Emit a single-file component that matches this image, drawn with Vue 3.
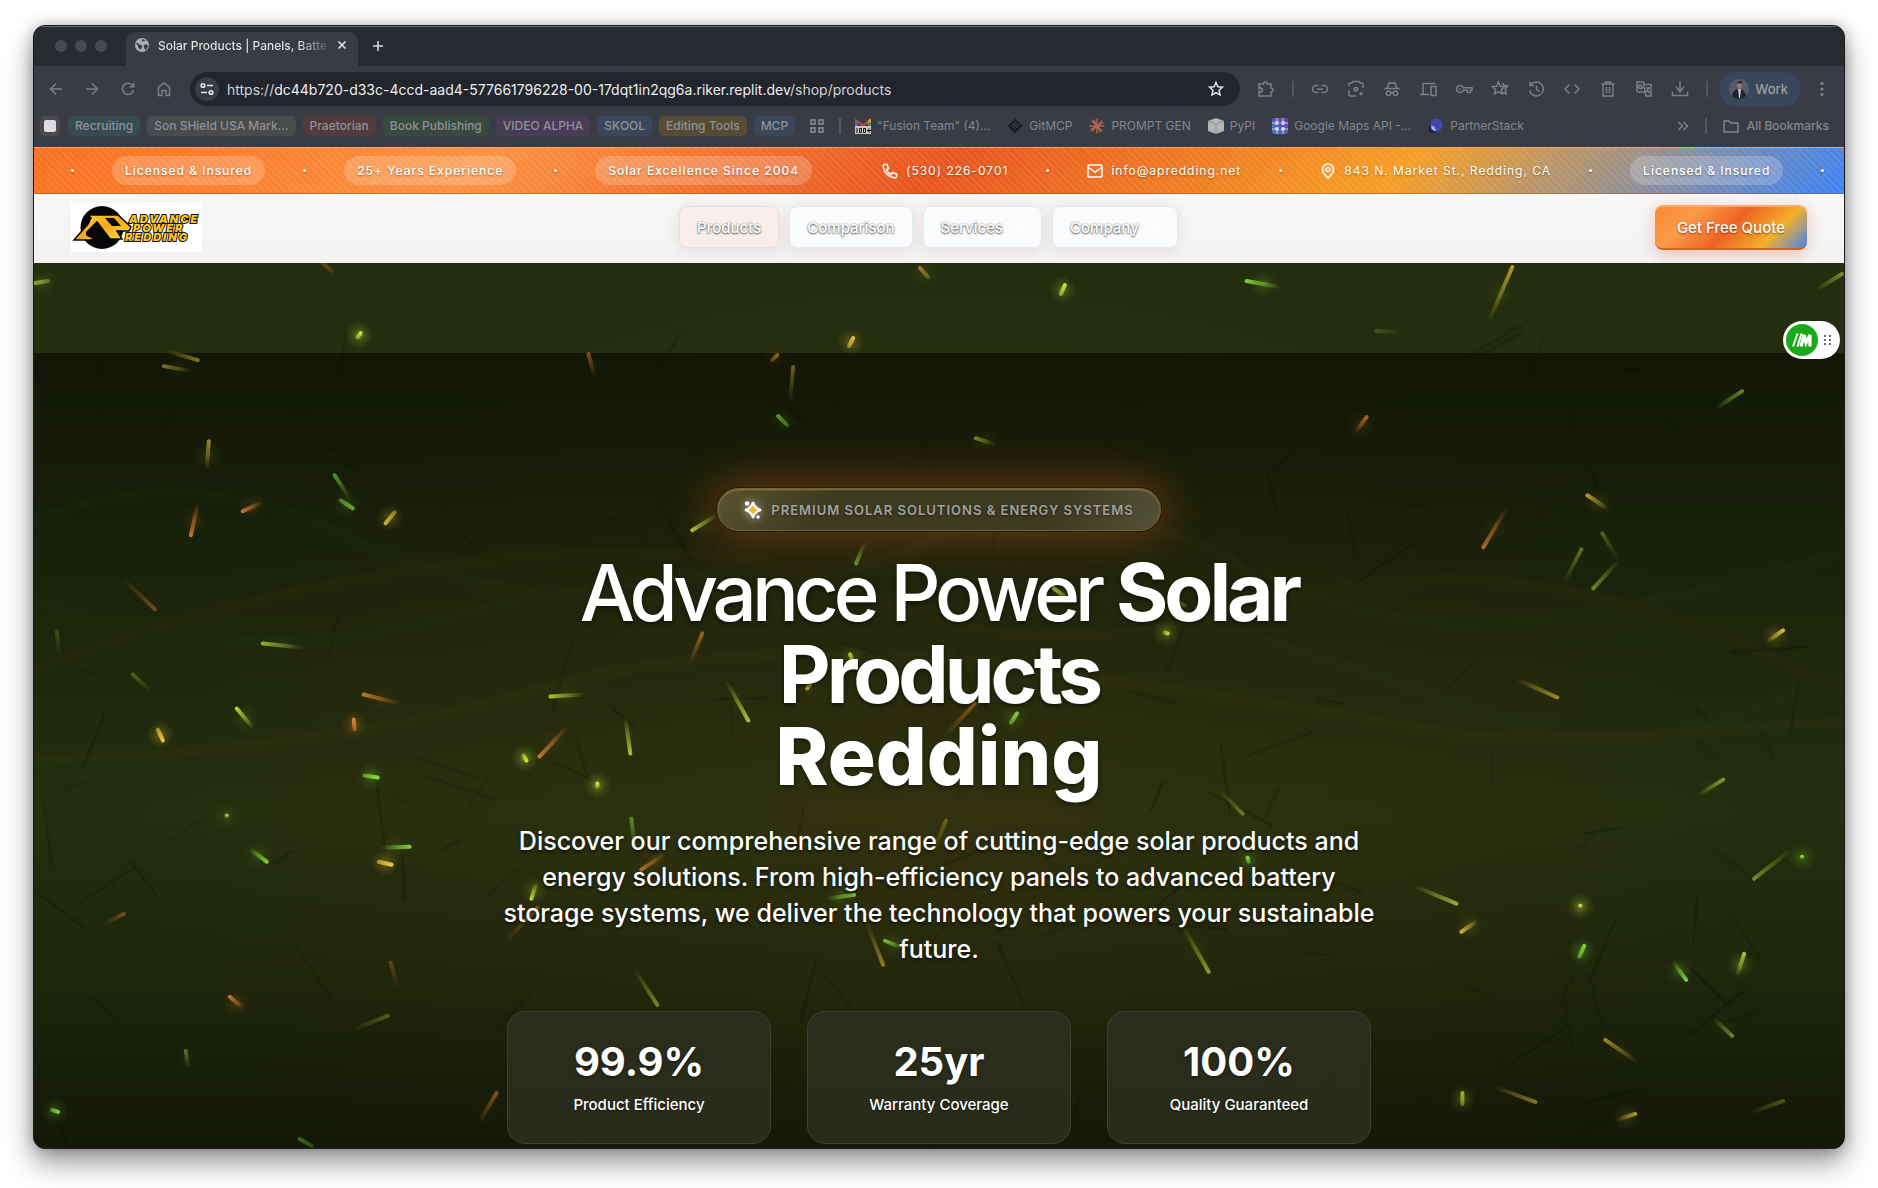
<script setup>
const chips = [
  { label: 'Recruiting', tone: 'teal' },
  { label: 'Son SHield USA Mark...', tone: 'gray' },
  { label: 'Praetorian', tone: 'red' },
  { label: 'Book Publishing', tone: 'green' },
  { label: 'VIDEO ALPHA', tone: 'purple' },
  { label: 'SKOOL', tone: 'blue' },
  { label: 'Editing Tools', tone: 'gold' },
  { label: 'MCP', tone: 'blue' },
]

const tools = [
  'M7.500 5.500H5a3.500 3.500 0 0 0 0 7h2.500M10.500 5.500H13a3.500 3.500 0 0 1 0 7h-2.500M6 9h6',
  'M2 6V4.500A1.500 1.500 0 0 1 3.500 3H5l1-1.500h6L13 3h1.500A1.500 1.500 0 0 1 16 4.500V8M2 10v4.500A1.500 1.500 0 0 0 3.500 16H9M9 7.500a1.800 1.800 0 1 1 0 3.600a1.800 1.800 0 1 1 0-3.600M9 9v.8M14 12v3.600M12.200 13.800h3.600',
  'M1.500 8.500h15M4.500 8L6 2.500l3 1l3-1L13.500 8M5.500 11a2.300 2.300 0 1 1 0 4.600a2.300 2.300 0 1 1 0-4.600M12.500 11a2.300 2.300 0 1 1 0 4.600a2.300 2.300 0 1 1 0-4.600M7.500 13q1.500-1.200 3 0',
  'M4 14V3.500h12.500M1 14.500h9M12 6.500h5v9h-5z',
  'M5 5.500a3.500 3.500 0 1 0 0 7a3.500 3.500 0 0 0 3.300-2.300H12.500v2.300h3V10.200H17V7.800H8.300A3.500 3.500 0 0 0 5 5.500M5 8.300v1.400M4.300 9h1.400',
  'M7.500 2l1.800 4.200l4.500.4l-3.400 3l1 4.400l-3.900-2.300L3.600 14l1-4.400l-3.400-3l4.500-.4zM12 3l1 2.300l4 .7l-2.700 2.500l1 5.500l-3-1.500',
  'M3.500 5A7 7 0 1 1 2.500 10.500M3 1.500V5.500H7M9.500 5.500V9.500L12.500 11.500',
  'M6.500 4.500L2 9l4.500 4.500M11.500 4.500L16 9l-4.500 4.500',
  'M2.500 4h13M6.500 4V2h5v2M4 4v12h10V4M7.500 7v6.500M10.500 7v6.500',
  'M2 2h6.500l1.500 10H3.500A1.500 1.500 0 0 1 2 10.500zM9.500 4.500H16V16h-5l-1-4M7.500 6.500H5.500M7.500 6.500a2 2 0 1 1-1-1.500M11 8h4M13 7v1q0 3-2 4M12 9.500l2.500 3.500',
  'M9 1.500V11M5 7l4 4.500L13 7M1.500 11.500V15.500H16.500V11.500',
]

const navItems = [
  { label: 'Products', active: true },
  { label: 'Comparison' },
  { label: 'Services', menu: true },
  { label: 'Company', menu: true },
]

const stats = [
  { value: '99.9%', label: 'Product Efficiency' },
  { value: '25yr', label: 'Warranty Coverage' },
  { value: '100%', label: 'Quality Guaranteed' },
]

const Y = '#e8c83a'
const O = '#e8862c'
const L = '#c4e23c'
const G = '#86dc36'

// head x, head y, tail x, tail y, colour, brightness, glow
const sparks = [
  [34, 283, 47, 281, L, .6, .4], [360, 333, 357, 337, L, 1, 1], [322, 263, 331, 271, O, .3, 0],
  [920, 268, 928, 277, Y, .5, .2], [1065, 285, 1061, 294, L, 1, .8], [1247, 281, 1280, 287, G, .9, .6],
  [1513, 267, 1490, 320, Y, .7, .2], [1843, 274, 1817, 290, L, .5, 0], [1377, 331, 1400, 332, L, .2, 0],
  [853, 338, 849, 346, Y, .9, .8], [777, 355, 772, 360, O, .6, .2], [793, 367, 790, 400, Y, .4, 0],
  [588, 354, 594, 375, O, .5, .1], [778, 416, 787, 425, G, .6, .2], [976, 438, 994, 444, L, .5, .2],
  [692, 530, 716, 515, L, .8, .2], [197, 360, 166, 351, Y, .5, .1], [163, 366, 191, 371, Y, .5, .1],
  [208, 441, 206, 469, Y, .6, .3], [190, 535, 197, 504, O, .8, .3], [242, 511, 261, 502, O, .8, .3],
  [334, 475, 349, 498, G, .6, 0], [352, 508, 340, 500, G, .7, .4], [385, 523, 394, 512, Y, .8, .7],
  [154, 609, 124, 580, O, .4, 0], [262, 643, 302, 647, L, .7, .1], [236, 708, 252, 727, L, .9, .3],
  [162, 740, 157, 729, Y, 1, .9], [363, 694, 399, 703, O, .8, .2], [353, 719, 354, 729, O, .9, .8],
  [377, 777, 364, 775, G, 1, .7], [526, 760, 523, 755, L, 1, 1], [539, 756, 566, 727, O, .8, .2],
  [550, 696, 583, 694, L, .8, .2], [226, 815, 226, 816, L, .8, .3], [266, 861, 249, 848, G, .9, .4],
  [409, 846, 381, 847, G, .9, .3], [391, 864, 378, 861, Y, 1, .8], [123, 913, 104, 923, O, .4, 0],
  [531, 898, 536, 882, L, .9, .6], [229, 996, 242, 1007, O, .8, .5], [387, 1015, 354, 1028, L, .3, 0],
  [185, 1050, 187, 1066, L, .4, .1], [57, 1111, 51, 1109, G, .9, .6], [496, 1092, 479, 1121, O, .5, .1],
  [390, 962, 397, 986, O, .3, 0], [299, 1138, 311, 1145, G, .4, 0], [132, 674, 150, 691, L, .3, 0],
  [56, 631, 58, 655, L, .2, 0], [1743, 391, 1717, 408, L, .5, .1], [1367, 417, 1356, 432, O, .7, .3],
  [1588, 495, 1609, 509, Y, .7, .3], [1484, 547, 1507, 508, O, .7, .2], [1582, 549, 1565, 582, L, .4, 0],
  [1603, 533, 1618, 558, L, .3, 0], [1594, 588, 1619, 561, L, .5, 0], [1784, 630, 1768, 641, Y, .9, .6],
  [1558, 697, 1518, 679, Y, .6, .1], [1724, 779, 1700, 794, L, .6, .1], [1755, 878, 1791, 850, L, .5, 0],
  [1803, 856, 1803, 857, G, 1, .7], [1457, 903, 1416, 886, L, .7, .1], [1462, 931, 1478, 920, Y, .8, .4],
  [1581, 905, 1581, 906, L, 1, 1], [1585, 945, 1580, 956, G, .9, .8], [1687, 979, 1674, 961, G, .9, .6],
  [1745, 953, 1738, 975, L, .8, .7], [1733, 1035, 1715, 1018, L, .5, .1], [1606, 1039, 1638, 1061, Y, .6, .1],
  [1463, 1092, 1463, 1103, L, .7, .6], [1536, 1101, 1495, 1086, Y, .5, 0], [1636, 1113, 1618, 1119, Y, .7, .4],
  [1784, 1100, 1751, 1112, L, .3, 0], [702, 633, 690, 662, O, .6, 0], [748, 720, 727, 682, L, .8, .1],
  [630, 753, 625, 717, L, .8, .1], [597, 783, 597, 786, L, 1, 1], [1168, 633, 1165, 632, L, .9, .7],
  [850, 654, 852, 659, L, .8, .4], [807, 688, 810, 684, Y, .7, .2], [975, 703, 945, 735, O, .5, 0],
  [1017, 713, 1011, 722, G, .9, .5], [1243, 813, 1220, 790, L, .4, 0], [856, 563, 865, 542, G, .6, 0],
  [1054, 588, 1070, 600, L, .8, .3], [1177, 602, 1185, 605, G, .4, 0], [631, 818, 635, 850, G, .5, 0],
  [946, 820, 932, 853, Y, .3, 0], [641, 869, 665, 853, O, .7, .3], [1248, 857, 1249, 861, G, .9, .5],
  [854, 894, 827, 898, G, .8, .4], [537, 907, 506, 940, O, .4, 0], [883, 964, 867, 923, Y, .5, 0],
  [885, 940, 902, 947, G, .8, .4], [1209, 971, 1184, 927, L, .6, .1], [657, 1004, 635, 970, L, .5, 0],
]

// short sparks stay solid, long ones fade out along the tail
const tail = (s) => {
  const len = Math.hypot(s[2] - s[0], s[3] - s[1])
  const k = len < 16 ? 2.5 : 1.05
  return { x: s[0] + (s[2] - s[0]) * k, y: s[1] + (s[3] - s[1]) * k }
}

// faint twigs scattered behind the sparks
let seed = 7
const rand = () => {
  seed = (seed * 16807) % 2147483647
  return seed / 2147483647
}
const twigs = Array.from({ length: 130 }, () => {
  const x = 40 + rand() * 1790
  const y = 265 + rand() * 870
  const a = rand() * Math.PI * 2
  const len = 20 + rand() * 60
  return { x1: x, y1: y, x2: x + Math.cos(a) * len, y2: y + Math.sin(a) * len, o: 0.08 + rand() * 0.14 }
})
</script>

<template>
  <div class="desktop">
    <div class="window">
      <header class="chrome">
        <div class="tabstrip">
          <div class="lights"><i></i><i></i><i></i></div>
          <div class="tab">
            <svg width="16" height="16" viewBox="0 0 16 16"><circle cx="8" cy="8" r="7" fill="#a9adb8" /><path d="M2 6c3 0 3 2 5 2s1 3 0 4s-3-1-3-3zM8 2c-1 2 1 3 2 2s3-1 3 0M10 8c2-1 4 0 4 1c-1 3-2 4-3 4c0-2-2-3-1-5" fill="#3a3c45" /></svg>
            <span class="tab-title">Solar Products | Panels, Batte</span>
            <button class="bare" aria-label="Close tab"><svg width="10" height="10" viewBox="0 0 10 10"><path d="M1.500 1.500l7 7M8.500 1.500l-7 7" stroke="#dfe1e6" stroke-width="1.600" /></svg></button>
          </div>
          <button class="bare plus" aria-label="New tab"><svg width="12" height="12" viewBox="0 0 12 12"><path d="M6 1v10M1 6h10" stroke="#d5d7dc" stroke-width="1.600" /></svg></button>
        </div>

        <div class="toolbar">
          <div class="history">
            <button class="bare" aria-label="Back"><svg class="ic" viewBox="0 0 18 18"><path d="M15 9H3.500M9 3.500L3.500 9L9 14.500" /></svg></button>
            <button class="bare" aria-label="Forward"><svg class="ic" viewBox="0 0 18 18"><path d="M3 9h11.500M9 3.500L14.500 9L9 14.500" /></svg></button>
            <button class="bare" aria-label="Reload"><svg class="ic" viewBox="0 0 18 18"><path d="M14.500 10A5.600 5.600 0 1 1 13 5L14.500 6.500M14.700 2.500V6.800H10.400" /></svg></button>
            <button class="bare" aria-label="Home"><svg class="ic" viewBox="0 0 18 18"><path d="M3.500 7.200L9 3l5.500 4.200V15.500H11V10.500H7v5H3.500z" /></svg></button>
          </div>
          <div class="omnibox">
            <span class="site-info"><svg width="16" height="16" viewBox="0 0 16 16" fill="none" stroke="#e4e6ea" stroke-width="1.600"><circle cx="4" cy="4.500" r="1.800" /><path d="M8 4.500h6M2 11.500h6" /><circle cx="12" cy="11.500" r="1.800" /></svg></span>
            <span class="url"><span class="soft">https://</span>dc44b720-d33c-4ccd-aad4-577661796228-00-17dqt1in2qg6a.riker.replit.dev<span class="soft">/shop/products</span></span>
            <button class="bare" aria-label="Bookmark this page"><svg class="ic bright" viewBox="0 0 18 18"><path d="M9 2.500l1.900 4.300l4.600.4l-3.500 3.100l1.100 4.600L9 12.500l-4.100 2.400L6 10.300L2.500 7.200l4.600-.4z" /></svg></button>
          </div>
          <div class="tools">
            <svg class="ic" viewBox="0 0 18 18"><path d="M2 4h4.500a2 2 0 1 1 4 0H14v4a2 2 0 1 1 0 4v4H2v-4.500a2 2 0 1 0 0-3z" /></svg>
            <i class="sep"></i>
            <svg v-for="(d, i) in tools" :key="i" class="ic" viewBox="0 0 18 18"><path :d="d" /></svg>
            <i class="sep"></i>
          </div>
          <button class="profile">
            <svg width="20" height="20" viewBox="0 0 20 20"><circle cx="10" cy="10" r="10" fill="#585c68" /><path d="M3 17q1-7 7-7t7 7q-3 3-7 3t-7-3" fill="#20232b" /><path d="M9 10h3l-1 9h-1z" fill="#b9c3d1" /><ellipse cx="10.500" cy="6" rx="2.600" ry="3.500" fill="#93756a" /><path d="M8 5q0-3 3-3t2 3q-2-2-5 0" fill="#2a2320" /></svg>
            Work
          </button>
          <button class="bare kebab" aria-label="Menu"><svg width="4" height="16" viewBox="0 0 4 16" fill="#81848d"><circle cx="2" cy="2.500" r="1.600" /><circle cx="2" cy="8" r="1.600" /><circle cx="2" cy="13.500" r="1.600" /></svg></button>
        </div>

        <nav class="bookmarks" aria-label="Bookmarks">
          <span class="chip-box"><i></i></span>
          <a v-for="c in chips" :key="c.label" href="#" class="chip" :class="c.tone">{{ c.label }}</a>
          <svg class="grid-icon" width="14" height="14" viewBox="0 0 14 14" fill="none" stroke="#7a7d86" stroke-width="1.800"><path d="M1 1h4v4H1zM9 1h4v4H9zM1 9h4v4H1zM9 9h4v4H9z" /></svg>
          <i class="sep"></i>
          <a href="#" class="mark"><svg width="16" height="16" viewBox="0 0 16 16"><path d="M0 0.500L8 6l8-5.500V8H0z" fill="#b5483e" /><path d="M0 3l3 2v5H0z" fill="#3c6fbd" /><path d="M13 5l3-2v7h-3z" fill="#3c8a55" /><path d="M13 2l3-1.500V4l-3 2z" fill="#c09a3a" /><path d="M3 5.500L8 9l5-3.500V9H3z" fill="#3a3c45" /><rect y="8" width="16" height="8" fill="#c4c4c4" /><path d="M2 10v5M4.500 10.500h2v4h-2zM8.500 10.500h2v4h-2zM12 12.500h4M14 10.500v4" stroke="#111" fill="none" /></svg>"Fusion Team" (4)...</a>
          <a href="#" class="mark"><svg width="16" height="16" viewBox="0 0 16 16"><path d="M8 0.500L15.500 8L8 15.500L0.500 8z" fill="#1d1e20" /><path d="M5 8l4-4M6 10l5-5M8 11l4-4" stroke="#4b4d52" /></svg>GitMCP</a>
          <a href="#" class="mark"><svg width="16" height="16" viewBox="0 0 16 16" stroke="#b06552" stroke-width="1.400"><path d="M8 0.500v15M0.500 8h15M2.700 2.700l10.600 10.600M13.300 2.700L2.700 13.300M4.500 1.500l7 13M14.500 4.500l-13 7" /></svg>PROMPT GEN</a>
          <a href="#" class="mark"><svg width="16" height="16" viewBox="0 0 16 16"><path d="M8 0l8 3v10l-8 3l-8-3V3z" fill="#b3b4b6" /><path d="M0 3l8 3l8-3M8 6v10" stroke="#8f9194" fill="none" /></svg>PyPI</a>
          <a href="#" class="mark"><svg width="16" height="16" viewBox="0 0 16 16"><defs><linearGradient id="maps" x1="0" y1="1" x2="1" y2="0"><stop stop-color="#3f7fc4" /><stop offset="1" stop-color="#6b3fb0" /></linearGradient></defs><rect width="16" height="16" rx="3" fill="url(#maps)" /><path d="M5 0v5H0M11 5h5M11 0v5M0 11h5v5M16 11h-5v5" stroke="#c9cbe0" fill="none" /><g fill="#d5d6e6"><circle cx="5" cy="5" r="2" /><circle cx="11" cy="5" r="2" /><circle cx="5" cy="11" r="2" /><circle cx="11" cy="11" r="2" /></g></svg>Google Maps API -...</a>
          <a href="#" class="mark"><svg width="16" height="16" viewBox="0 0 16 16"><ellipse cx="4.500" cy="11" rx="4" ry="4.500" fill="#1c2357" /><ellipse cx="8.500" cy="7" rx="6" ry="6.500" fill="#4149b0" /><path d="M3 8q4-1 5 5q-5 0-5-5" fill="#a6abd8" /></svg>PartnerStack</a>
          <span class="spring"></span>
          <svg width="12" height="12" viewBox="0 0 12 12" fill="none" stroke="#81848d" stroke-width="1.400"><path d="M1.500 2l4 4l-4 4M6.500 2l4 4l-4 4" /></svg>
          <i class="sep wide"></i>
          <a href="#" class="mark all"><svg width="16" height="14" viewBox="0 0 16 14" fill="none" stroke="#81848d" stroke-width="1.500"><path d="M1 2h5l2 2h7v9H1z" stroke-linejoin="round" /></svg>All Bookmarks</a>
        </nav>
      </header>

      <main class="page">
        <div class="ticker">
          <i class="dot"></i>
          <span class="pill">Licensed &amp; Insured</span>
          <i class="dot"></i>
          <span class="pill">25+ Years Experience</span>
          <i class="dot"></i>
          <span class="pill">Solar Excellence Since 2004</span>
          <a href="#" class="contact first"><svg width="16" height="16" viewBox="0 0 16 16"><path d="M2 1.500h3l1.500 4l-2 1.300a9 9 0 0 0 4.700 4.700l1.300-2l4 1.500v3q-1 1-2 .9A13 13 0 0 1 1.200 3.500q0-1.500.8-2z" /></svg>(530) 226-0701</a>
          <i class="dot"></i>
          <a href="#" class="contact"><svg width="16" height="16" viewBox="0 0 16 16"><rect x="1" y="2" width="14" height="12" rx="1" /><path d="M1 4l7 5l7-5" /></svg>info@apredding.net</a>
          <i class="dot"></i>
          <a href="#" class="contact"><svg width="16" height="16" viewBox="0 0 16 16"><path d="M8 15q-5.500-5-5.500-8.500a5.500 5.500 0 0 1 11 0Q13.500 10 8 15z" /><circle cx="8" cy="6.500" r="2" /></svg>843 N. Market St., Redding, CA</a>
          <i class="dot"></i>
          <span class="pill">Licensed &amp; Insured</span>
          <i class="dot"></i>
        </div>

        <div class="navbar">
          <a href="#" class="logo" aria-label="Home">
            <svg width="131" height="49" viewBox="0 0 131 49">
              <defs><linearGradient id="gold" x1="0" y1="0" x2="1" y2="1"><stop stop-color="#fdd835" /><stop offset=".5" stop-color="#f6a81c" /><stop offset="1" stop-color="#fbe04a" /></linearGradient></defs>
              <circle cx="31" cy="24.500" r="21.500" fill="#06070a" />
              <path d="M17 12H47L60 24L58 28H46L51 36H39L26 19L16 29Q14 33 23 35L20 37H3L17 21L20 15z" fill="url(#gold)" stroke="#06070a" stroke-width="1.500" />
              <path d="M34 15h9l7 8h-9z" fill="#06070a" />
              <g class="logo-text"><text x="58" y="20">ADVANCE</text><text x="62" y="29">POWER</text><text x="54" y="38">REDDING</text></g>
            </svg>
          </a>
          <nav class="menu" aria-label="Main">
            <button v-for="n in navItems" :key="n.label" :class="{ active: n.active }">
              {{ n.label }}
              <svg v-if="n.menu" width="12" height="12" viewBox="0 0 12 12"><path d="M2 4l4 4l4-4" fill="none" stroke="#fff" stroke-width="1.500" /></svg>
            </button>
          </nav>
          <button class="quote">Get Free Quote</button>
        </div>

        <section class="hero">
          <div class="shade"></div>
          <svg class="fireflies" viewBox="33 263 1812 884" preserveAspectRatio="none" aria-hidden="true">
            <defs>
              <linearGradient v-for="(s, i) in sparks" :id="'s' + i" :key="i" gradientUnits="userSpaceOnUse" :x1="s[0]" :y1="s[1]" :x2="tail(s).x" :y2="tail(s).y">
                <stop :stop-color="s[4]" /><stop offset="1" :stop-color="s[4]" stop-opacity="0" />
              </linearGradient>
              <radialGradient v-for="(c, i) in [Y, O, L, G]" :id="'g' + i" :key="c"><stop :stop-color="c" stop-opacity=".42" /><stop offset=".5" :stop-color="c" stop-opacity=".14" /><stop offset="1" :stop-color="c" stop-opacity="0" /></radialGradient>
            </defs>
            <line v-for="(t, i) in twigs" :key="'t' + i" :x1="t.x1" :y1="t.y1" :x2="t.x2" :y2="t.y2" stroke="#070d02" stroke-width="3" :opacity="t.o" />
            <g class="waves">
              <path d="M33 520q150-60 300 10t300 70t300-60t300 20t300 60t320-70" />
              <path d="M33 600q200 70 400 20t400-50t400 60t300 100t312-60" />
              <path d="M33 670q200-80 450-110t400 40t400 0t560 90" stroke="#6a4a10" />
              <path d="M33 760q300-10 500-70t500-20t400 60t412-10" stroke="#6a5a10" />
            </g>
            <g v-for="(s, i) in sparks" :key="'k' + i">
              <circle v-if="s[6]" :cx="(s[0] + s[2]) / 2" :cy="(s[1] + s[3]) / 2" r="14" :fill="'url(#g' + [Y, O, L, G].indexOf(s[4]) + ')'" :opacity="s[6]" />
              <line :x1="s[0]" :y1="s[1]" :x2="s[2]" :y2="s[3]" :stroke="'url(#s' + i + ')'" stroke-width="4" stroke-linecap="round" :opacity="s[5]" />
            </g>
          </svg>

          <div class="content">
            <p class="badge">
              <svg width="20" height="20" viewBox="0 0 20 20"><path d="M10 2q1.500 6.500 8 8q-6.500 1.500-8 8q-1.500-6.500-8-8q6.500-1.500 8-8z" fill="#f5b52e" stroke="#fff" stroke-width="2.200" /><circle cx="4" cy="3.500" r="2.200" fill="#fff" /><circle cx="15" cy="17" r="1.800" fill="#fff" /></svg>
              <span>PREMIUM SOLAR SOLUTIONS &amp; ENERGY SYSTEMS</span>
            </p>
            <h1>Advance Power <b>Solar Products</b><strong>Redding</strong></h1>
            <p class="lead">Discover our comprehensive range of cutting-edge solar products and energy solutions. From high-efficiency panels to advanced battery storage systems, we deliver the technology that powers your sustainable future.</p>
            <dl class="stats">
              <div v-for="s in stats" :key="s.label" class="stat"><dd>{{ s.value }}</dd><dt>{{ s.label }}</dt></div>
            </dl>
          </div>
        </section>
      </main>

      <button class="widget" aria-label="Open assistant">
        <svg width="32" height="32" viewBox="0 0 32 32"><circle cx="16" cy="16" r="16" fill="#1ba91c" /><path d="M7 22.500L11.500 9.500M11.500 22.500L15.500 9.500" stroke="#fff" stroke-width="2" /><path d="M15 22.500L18 11l2 8l4-8v11.500" fill="none" stroke="#fff" stroke-width="3.200" /></svg>
        <svg width="8" height="12" viewBox="0 0 8 12" fill="#666"><path d="M0 1h2v2H0zM5 1h2v2H5zM0 5h2v2H0zM5 5h2v2H5zM0 9h2v2H0zM5 9h2v2H5z" /></svg>
      </button>
    </div>
  </div>
</template>

<style>
body { margin: 0; background: #fff; }
</style>

<style scoped>
* { box-sizing: border-box; }
.desktop {
  display: flex;
  min-height: 100vh;
  padding: 25px 33px 41px;
  font-family: Inter, "Liberation Sans", sans-serif;
}
.window {
  position: relative;
  flex: 1;
  min-width: 0;
  display: flex;
  flex-direction: column;
  border: 1px solid #1b1c1e;
  border-radius: 12px;
  overflow: hidden;
  background: #1b220c;
  box-shadow: 0 14px 28px rgba(0, 0, 0, .4), 0 0 14px rgba(0, 0, 0, .25);
}
a { color: inherit; text-decoration: none; }
button { font: inherit; color: inherit; border: 0; cursor: pointer; }
.bare { display: flex; padding: 0; background: none; }
svg { flex: none; display: block; }
i { flex: none; display: block; }

/* browser chrome */
.chrome { background: #3a3c45; color: #83868f; }
.tabstrip {
  display: flex;
  align-items: center;
  height: 40px;
  padding-bottom: 2px;
  background: #282b2f;
  border-top: 1px solid #63666a;
}
.lights { display: flex; gap: 8px; padding: 0 19px 0 21px; }
.lights i { width: 12px; height: 12px; border-radius: 50%; background: #46494d; }
.tab {
  display: flex;
  align-items: center;
  align-self: flex-end;
  width: 232px;
  height: 34px;
  margin-bottom: -2px;
  padding: 0 11px 8px 8px;
  border-radius: 10px 10px 0 0;
  background: #3a3c45;
}
.tab-title {
  flex: 1;
  margin: 0 11px 0 8px;
  overflow: hidden;
  white-space: nowrap;
  font-size: 12px;
  font-weight: 500;
  color: transparent;
  background: linear-gradient(90deg, #e6e7ea 82%, #5a5c64);
  -webkit-background-clip: text;
  background-clip: text;
}
.plus { margin-left: 14px; }
.toolbar { display: flex; align-items: center; height: 46px; padding: 0 20px 0 13px; }
.history { display: flex; gap: 18px; margin-right: 17px; }
.ic { width: 18px; height: 18px; fill: none; stroke: #7b7e87; stroke-width: 1.5; }
.ic.bright { stroke: #e0e2e6; }
.omnibox {
  flex: 1;
  min-width: 0;
  display: flex;
  align-items: center;
  height: 34px;
  padding: 0 15px 0 5px;
  border-radius: 17px;
  background: #23252d;
}
.site-info {
  display: grid;
  place-items: center;
  width: 24px;
  height: 24px;
  border-radius: 50%;
  background: #3a3c45;
}
.url { flex: 1; margin-left: 8px; overflow: hidden; white-space: nowrap; font-size: 14px; color: #eceef1; }
.soft { color: #d0d2d8; }
.tools { display: flex; align-items: center; gap: 18px; margin: 0 12px 0 17px; }
.tools > .sep { margin: 0 -1px; }
.sep { width: 2px; height: 16px; background: #53565f; }
.profile {
  display: flex;
  align-items: center;
  gap: 6px;
  height: 34px;
  padding: 0 13px 0 10px;
  border-radius: 17px;
  background: #3a465c;
  color: #9a9da3;
  font-size: 13px;
  font-weight: 500;
}
.kebab { margin-left: 19px; }
.bookmarks {
  display: flex;
  align-items: center;
  gap: 8px;
  height: 35px;
  padding: 0 15px 8px 6px;
  font-size: 12px;
  white-space: nowrap;
}
.chip-box { display: grid; place-items: center; width: 20px; height: 20px; border-radius: 5px; background: #4a4a4c; }
.chip-box i { width: 12px; height: 12px; border-radius: 2px; background: #dcdde1; }
.chip { padding: 0 7px; border-radius: 5px; line-height: 20px; font-weight: 500; color: #8e9296; }
.chip ~ .chip { margin-left: -1px; }
.teal { background: #364c53; }
.gray { background: #4a4b4d; }
.red { background: #533a3c; }
.green { background: #384a3e; }
.purple { background: #483c54; }
.blue { background: #3a465b; }
.gold { background: #564c34; }
.grid-icon { margin: 0 7px; }
.mark { display: flex; align-items: center; gap: 6px; margin-right: 9px; }
.bookmarks > .sep { margin: 0 6px 0 0; }
.spring { flex: 1; }
.bookmarks > .sep.wide { margin: 0 8px; }
.mark.all { gap: 8px; margin: 0; font-weight: 500; }

/* ticker */
.page { flex: 1; display: flex; flex-direction: column; }
.ticker {
  display: flex;
  align-items: center;
  gap: 38px;
  height: 47px;
  padding-left: 37px;
  overflow: hidden;
  white-space: nowrap;
  color: #fff;
  font-size: 12px;
  font-weight: 500;
  letter-spacing: 1px;
  text-shadow: 0 1px 2px rgba(0, 0, 0, .4);
  border-top: 1px solid #f0a070;
  border-bottom: 1px solid rgba(120, 60, 20, .35);
  background:
    repeating-linear-gradient(45deg, rgba(255, 255, 255, 0) 0 3px, rgba(255, 255, 255, .07) 3px 5px),
    linear-gradient(135deg, #f97020 0%, #fb9140 25%, #e9551f 50%, #f59e26 75%, #3b82f6 100%);
}
.dot { width: 3px; height: 3px; border-radius: 50%; background: #fff; box-shadow: 0 1px 2px rgba(0, 0, 0, .4); }
.pill { padding: 0 13px; border-radius: 15px; line-height: 29px; background: rgba(255, 255, 255, .2); }
.contact { display: flex; align-items: center; gap: 8px; font-weight: 400; }
.contact.first { margin-left: 32px; }
.contact svg { fill: none; stroke: #fff; stroke-width: 1.5; }

/* navigation bar */
.navbar {
  display: flex;
  align-items: center;
  justify-content: space-between;
  height: 69px;
  padding: 0 37px 3px;
  background: linear-gradient(#f7f7f7, #f1f3f3);
}
.logo { background: #fff; }
.logo-text { font-size: 11px; letter-spacing: 2px; font-weight: 900; font-style: italic; fill: #f7c62c; stroke: #16130a; stroke-width: 2; paint-order: stroke; }
.menu { display: flex; gap: 10px; }
.menu button {
  display: flex;
  align-items: center;
  gap: 9px;
  height: 42px;
  padding: 0 17px;
  border: 1px solid #e3eaf2;
  border-radius: 8px;
  background: #fafbfd;
  color: #fff;
  font-size: 15px;
  font-weight: 500;
  text-shadow: 0 1px 2px rgba(0, 0, 0, .6), 0 0 2px rgba(0, 0, 0, .4);
  box-shadow: 0 2px 14px rgba(190, 130, 120, .22);
}
.menu button.active { background: #f9eeeb; border-color: #e5dfe2; }
.quote {
  height: 45px;
  padding: 0 22px;
  border-radius: 8px;
  border-top: 2px solid #fda870;
  border-bottom: 2px solid #c9662a;
  background: linear-gradient(135deg, #fb8a30 0%, #fb9a48 25%, #ee6322 50%, #f5b02c 75%, #3b82f6 100%) border-box;
  color: #fff;
  font-size: 15px;
  font-weight: 500;
  text-shadow: 0 1px 2px rgba(0, 0, 0, .5);
  box-shadow: 0 4px 16px rgba(230, 90, 50, .35);
}

/* hero */
.hero {
  position: relative;
  flex: 1;
  padding: 225px 16px 4px;
  color: #fff;
  background:
    radial-gradient(ellipse 45% 60% at 50% 62%, rgba(62, 54, 14, .5), transparent),
    #242e0e;
}
.shade {
  position: absolute;
  inset: 90px 0 0;
  background: linear-gradient(rgba(0, 0, 0, .52), rgba(0, 0, 0, .25) 28%, rgba(0, 0, 0, 0) 58%, rgba(0, 0, 0, .2) 80%, rgba(0, 0, 0, .48));
}
.fireflies { position: absolute; inset: 0; width: 100%; height: 100%; }
.waves { fill: none; stroke: #3b5a2c; stroke-width: 9; opacity: .08; filter: blur(3px); }
.content { position: relative; display: flex; flex-direction: column; align-items: center; max-width: 880px; margin: 0 auto; text-align: center; }
.badge {
  display: flex;
  align-items: center;
  gap: 8px;
  height: 43px;
  margin: 0;
  padding: 0 26px 0 25px;
  border-radius: 22px;
  border: 1px solid #76602f;
  background: linear-gradient(120deg, #5a5230, #3c3b22 25%, #3a3a22 75%, #555138);
  box-shadow: 0 0 0 1px #20200c, 0 0 44px 6px rgba(190, 84, 30, .45), inset 0 1px 2px rgba(255, 200, 110, .4);
  font-size: 13px;
  font-weight: 600;
  letter-spacing: 1px;
  white-space: nowrap;
}
.badge span { color: #a2a29c; text-shadow: 0 1px 2px rgba(0, 0, 0, .5); }
.badge svg { filter: drop-shadow(0 0 5px rgba(255, 255, 255, .6)); }
h1 {
  margin: 20px 0 27px;
  max-width: 760px;
  font-size: 78px;
  line-height: 81px;
  font-weight: 500;
  letter-spacing: -5px;
  text-shadow: 0 2px 4px rgba(0, 0, 0, .5);
}
h1 b { font-weight: 700; letter-spacing: -4px; font-size: 80px; }
h1 strong { display: block; font-size: 80px; font-weight: 800; letter-spacing: 0; }
.lead { margin: 0; font-size: 25px; line-height: 36px; font-weight: 500; text-shadow: 0 2px 3px rgba(0, 0, 0, .6); }
.stats { display: grid; grid-template-columns: repeat(3, 1fr); gap: 36px; width: 100%; max-width: 864px; margin: 44px 0 0; }
.stat {
  display: flex;
  flex-direction: column;
  height: 133px;
  padding-top: 26px;
  border: 1px solid #3c4230;
  border-radius: 18px;
  background: rgba(46, 49, 32, .8);
}
.stat dd { margin: 0; font-size: 40px; line-height: 48px; font-weight: 700; text-shadow: 0 1px 3px rgba(0, 0, 0, .5); }
.stat dt { margin-top: 7px; font-size: 15px; line-height: 24px; font-weight: 500; text-shadow: 0 1px 2px rgba(0, 0, 0, .5); }

.widget {
  position: absolute;
  top: 295px;
  right: 4px;
  display: flex;
  align-items: center;
  gap: 6px;
  height: 38px;
  width: 57px;
  padding: 0 3px;
  border-radius: 19px;
  background: #fff;
}
</style>
